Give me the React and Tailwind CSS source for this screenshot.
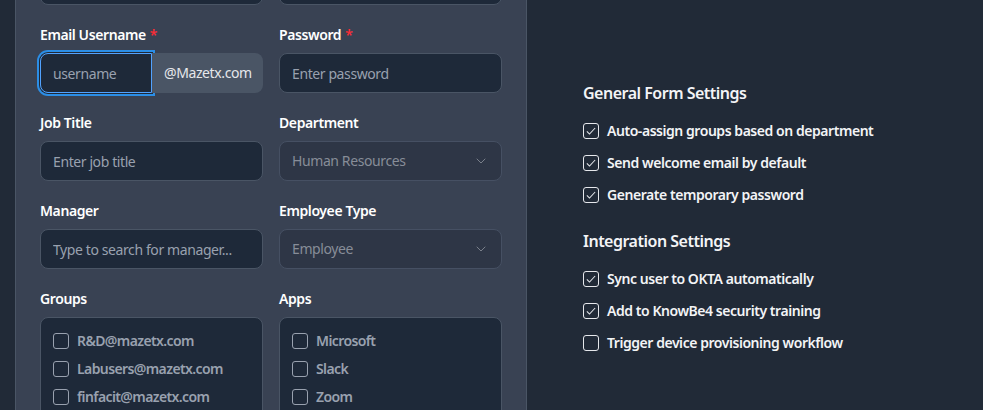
import { ChevronDown } from "lucide-react";

const font = { fontFamily: '"Noto Sans", "Open Sans", sans-serif' };

function Label({ children, required }) {
  return (
    <label className="mb-2 block h-5 text-sm font-semibold leading-5 tracking-[-0.4px] text-white">
      {children}
      {required && <span className="ml-1 text-red-500">*</span>}
    </label>
  );
}

function TextInput({ placeholder }) {
  return (
    <input
      placeholder={placeholder}
      className="h-10 w-full rounded-lg border border-gray-600 bg-gray-800 px-3 text-sm tracking-[-0.4px] text-gray-200 placeholder:text-gray-400 outline-none"
    />
  );
}

function FakeSelect({ value }) {
  return (
    <div className="flex h-10 w-full items-center justify-between rounded-lg border border-[#465063] bg-[#2e3646] px-3 text-sm tracking-[-0.4px] text-[#878d98]">
      <span>{value}</span>
      <ChevronDown className="h-4 w-4 text-[#7a808b]" strokeWidth={1.5} />
    </div>
  );
}

function Box({ checked }) {
  return (
    <span className="flex h-4 w-4 shrink-0 items-center justify-center rounded-[3px] border border-gray-200">
      {checked && (
        <svg viewBox="0 0 16 16" className="h-3 w-3" fill="none" stroke="#e5e7eb" strokeWidth="1.4">
          <path d="M2.5 8.5l3.5 3.5 7.5-8" />
        </svg>
      )}
    </span>
  );
}

function CheckList({ items }) {
  return (
    <div className="rounded-lg border border-gray-600 bg-gray-800 px-3 pt-[13px] pb-3">
      <div className="space-y-2">
        {items.map((it) => (
          <div key={it} className="flex h-5 items-center gap-2">
            <span className="h-4 w-4 shrink-0 rounded-[3px] border border-gray-400" />
            <span className="text-sm font-semibold tracking-[-0.6px] text-gray-400">{it}</span>
          </div>
        ))}
      </div>
    </div>
  );
}

function Setting({ children, checked }) {
  return (
    <div className="flex h-5 items-center gap-2">
      <Box checked={checked} />
      <span className="text-sm font-semibold tracking-[-0.45px] text-gray-100">{children}</span>
    </div>
  );
}

export default function App() {
  return (
    <div style={font} className="flex h-[410px] w-[983px] overflow-hidden bg-[#212a37]">
      <div className="ml-[15px] w-[512px] shrink-0 border-x border-gray-600 bg-[#394253] px-6">
        <div className="-mt-[63px] grid grid-cols-[223px_223px] gap-x-4 gap-y-5">
          <div>
            <Label>First Name</Label>
            <TextInput placeholder="" />
          </div>
          <div>
            <Label>Last Name</Label>
            <TextInput placeholder="" />
          </div>

          <div>
            <Label required>Email Username</Label>
            <div className="flex h-10 w-[223px]">
              <input
                placeholder="username"
                className="h-10 w-[112px] min-w-0 shrink-0 rounded-l-lg border border-blue-400 bg-gray-800 px-3 text-sm tracking-[-0.4px] text-gray-200 placeholder:text-gray-400 outline-none ring-2 ring-[#2b8ee6] ring-offset-1 ring-offset-[#1f2937]"
              />
              <div className="flex w-[111px] shrink-0 items-center rounded-r-lg bg-gray-600 px-3 text-sm tracking-[-0.4px] text-gray-200">
                @Mazetx.com
              </div>
            </div>
          </div>
          <div>
            <Label required>Password</Label>
            <TextInput placeholder="Enter password" />
          </div>

          <div>
            <Label>Job Title</Label>
            <TextInput placeholder="Enter job title" />
          </div>
          <div>
            <Label>Department</Label>
            <FakeSelect value="Human Resources" />
          </div>

          <div>
            <Label>Manager</Label>
            <TextInput placeholder="Type to search for manager..." />
          </div>
          <div>
            <Label>Employee Type</Label>
            <FakeSelect value="Employee" />
          </div>

          <div>
            <Label>Groups</Label>
            <CheckList items={["R&D@mazetx.com", "Labusers@mazetx.com", "finfacit@mazetx.com", "HR@mazetx.com"]} />
          </div>
          <div>
            <Label>Apps</Label>
            <CheckList items={["Microsoft", "Slack", "Zoom", "Adobe"]} />
          </div>
        </div>
      </div>

      <div className="flex-1 pl-[56px] pt-[81px]">
        <h3 className="mb-4 text-base font-semibold leading-6 tracking-[-0.5px] text-gray-100">General Form Settings</h3>
        <div className="space-y-3">
          <Setting checked>Auto-assign groups based on department</Setting>
          <Setting checked>Send welcome email by default</Setting>
          <Setting checked>Generate temporary password</Setting>
        </div>
        <h3 className="mt-6 mb-4 text-base font-semibold leading-6 tracking-[-0.5px] text-gray-100">Integration Settings</h3>
        <div className="space-y-3">
          <Setting checked>Sync user to OKTA automatically</Setting>
          <Setting checked>Add to KnowBe4 security training</Setting>
          <Setting>Trigger device provisioning workflow</Setting>
        </div>
      </div>
    </div>
  );
}
